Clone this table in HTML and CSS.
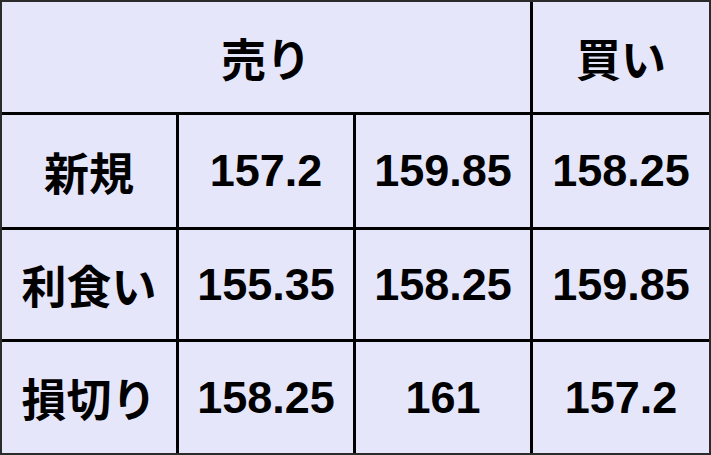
FILE: index.html
```html
<!DOCTYPE html>
<html lang="ja">
<head>
<meta charset="utf-8">
<link rel="stylesheet" href="styles.css">
</head>
<body>
<div class="grid">
  <div class="cell span3">売り</div>
  <div class="cell">買い</div>
  <div class="cell">新規</div>
  <div class="cell">157.2</div>
  <div class="cell">159.85</div>
  <div class="cell">158.25</div>
  <div class="cell">利食い</div>
  <div class="cell">155.35</div>
  <div class="cell">158.25</div>
  <div class="cell">159.85</div>
  <div class="cell">損切り</div>
  <div class="cell">158.25</div>
  <div class="cell">161</div>
  <div class="cell">157.2</div>
</div>
</body>
</html>
```
FILE: styles.css
```css
html, body {
  margin: 0;
  padding: 0;
  background: #e6e6fa;
}
.grid {
  box-sizing: border-box;
  width: 711px;
  height: 455px;
  border: 2px solid #2b2b2b;
  background: #000;
  display: grid;
  grid-template-columns: 174px 174px 174px 1fr;
  grid-template-rows: 110px 112px 109px 1fr;
  gap: 3px;
}
.cell {
  background: #e6e6fa;
  display: flex;
  align-items: center;
  justify-content: center;
  font-family: "Liberation Sans", "Noto Sans CJK JP", sans-serif;
  font-weight: bold;
  font-size: 45px;
  color: #000;
}
.span3 {
  grid-column: span 3;
}
```
